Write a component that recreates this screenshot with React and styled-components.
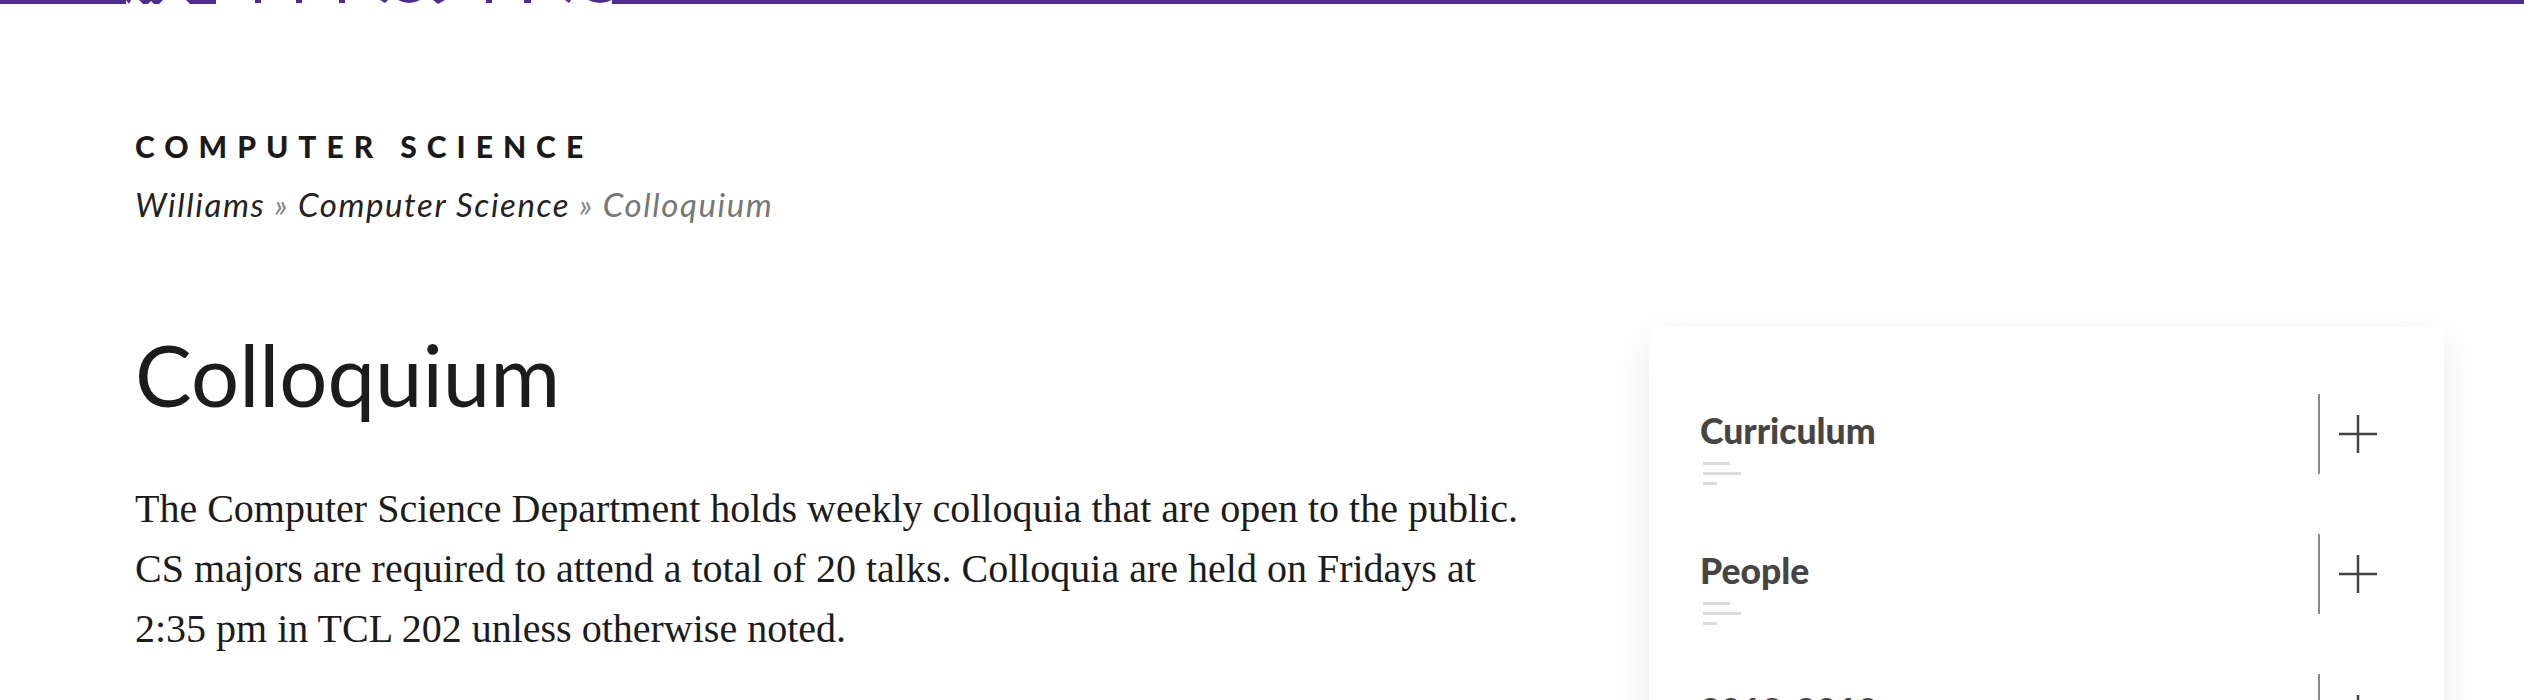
import styled, { createGlobalStyle } from "styled-components";

const GlobalStyle = createGlobalStyle`
    html, body {
        margin: 0;
        padding: 0;
        background: #fff;
    }
    body {
        font-family: Lato, "Noto Sans", sans-serif;
        color: #1c1c1c;
        overflow: hidden;
    }
`;

const purple = "#4f2d8f";

const TopBar = styled.header`
    display: flex;
    align-items: flex-start;
    height: 8px;
`;

const BarPiece = styled.div`
    height: 4px;
    background: ${purple};
    width: ${(p) => (p.$grow ? "auto" : `${p.$w}px`)};
    flex: ${(p) => (p.$grow ? 1 : "none")};
`;

const Page = styled.main`
    padding: 0 80px 0 135px;
`;

const DeptTitle = styled.div`
    margin-top: 120px;
    font-size: 30px;
    line-height: 36px;
    font-weight: 900;
    letter-spacing: 10px;
    text-transform: uppercase;
    color: #1a1a1a;
`;

const Crumbs = styled.nav`
    margin-top: 21px;
    font-size: 33px;
    line-height: 38px;
    font-style: italic;
    letter-spacing: 1.6px;
    color: #777;
`;

const Crumb = styled.a`
    color: #222;
    text-decoration: none;
`;

const Sep = styled.span`
    color: #888;
    margin: 0 9px;
`;

const Row = styled.div`
    display: flex;
    align-items: flex-start;
    gap: 90px;
    margin-top: 92px;
`;

const Content = styled.div`
    flex: 1;
    padding-top: 11px;
`;

const Heading = styled.h1`
    margin: 0;
    font-size: 85px;
    line-height: 96px;
    font-weight: 400;
    color: #1c1c1c;
`;

const Lead = styled.p`
    margin: 57px 0 0;
    max-width: 1420px;
    font-family: "Liberation Serif", "Times New Roman", serif;
    font-size: 40px;
    line-height: 60px;
    color: #1c1c1c;
`;

const Card = styled.aside`
    width: 795px;
    margin-top: 12px;
    padding: 67px 67px 0 51px;
    box-sizing: border-box;
    background: #fff;
    box-shadow: 0 14px 40px rgba(0, 0, 0, 0.09);
    min-height: 500px;
`;

const Item = styled.div`
    display: flex;
    align-items: flex-start;
    height: 80px;
    margin-bottom: 60px;
`;

const ItemText = styled.div`
    flex: 1;
    padding-top: 16px;
`;

const ItemTitle = styled.div`
    font-size: 35.5px;
    line-height: 41px;
    font-weight: 900;
    color: #454545;
`;

const Divider = styled.div`
    width: 2px;
    height: 80px;
    background: #8a8a8a;
`;

const PlusButton = styled.button`
    width: 38px;
    height: 80px;
    margin-left: 19px;
    padding: 0;
    border: 0;
    background: none;
    display: flex;
    align-items: center;
    justify-content: center;
    cursor: pointer;
`;

const Logo = () => (
    <svg width="491" height="8" viewBox="0 0 491 8">
        <g fill={purple}>
            <polygon points="0,0 5,0 3,4" />
            <polygon points="13,0 37,0 33,4 28,4 25,1 22,4 17,4" />
            <polygon points="60,0 90,0 90,4 64,4" />
            <rect x="129" y="0" width="6" height="3" />
            <rect x="170" y="0" width="6" height="3" />
            <rect x="213" y="0" width="6" height="3" />
            <path d="M254 0 H262 L259 3 Z" />
            <path d="M272 0 Q283 6 294 0 Z" />
            <path d="M307 0 H319 L312 4 Z" />
            <rect x="360" y="0" width="6" height="3" />
            <rect x="398" y="0" width="7" height="3" />
            <path d="M439 0 H445 L443 3 Z" />
            <path d="M462 0 Q474 6 486 0 Z" />
            <rect x="486" y="0" width="5" height="4" />
        </g>
    </svg>
);

const LinesIcon = () => (
    <svg width="40" height="24" viewBox="0 0 40 24" style={{ display: "block", marginTop: 11, marginLeft: 3 }}>
        <g fill="#dcdcdc">
            <rect x="0" y="0" width="27" height="3" />
            <rect x="0" y="10" width="38" height="3" />
            <rect x="0" y="20" width="14" height="3" />
        </g>
    </svg>
);

const PlusIcon = () => (
    <svg width="38" height="40" viewBox="0 0 38 40">
        <g stroke="#444" strokeWidth="2.5">
            <line x1="0" y1="20" x2="38" y2="20" />
            <line x1="19" y1="1" x2="19" y2="39" />
        </g>
    </svg>
);

const sections = ["Curriculum", "People", "2018-2019"];

const App = () => {
    return (
        <>
            <GlobalStyle />
            <TopBar>
                <BarPiece $w={126} />
                <Logo />
                <BarPiece $grow />
            </TopBar>
            <Page>
                <DeptTitle>Computer Science</DeptTitle>
                <Crumbs>
                    <Crumb href="#">Williams</Crumb>
                    <Sep>»</Sep>
                    <Crumb href="#">Computer Science</Crumb>
                    <Sep>»</Sep>
                    Colloquium
                </Crumbs>
                <Row>
                    <Content>
                        <Heading>Colloquium</Heading>
                        <Lead>
                            The Computer Science Department holds weekly colloquia that are open to the public.
                            CS majors are required to attend a total of 20 talks. Colloquia are held on Fridays at
                            2:35 pm in TCL 202 unless otherwise noted.
                        </Lead>
                    </Content>
                    <Card>
                        {sections.map((title) => (
                            <Item key={title}>
                                <ItemText>
                                    <ItemTitle>{title}</ItemTitle>
                                    <LinesIcon />
                                </ItemText>
                                <Divider />
                                <PlusButton aria-label={`Expand ${title}`}>
                                    <PlusIcon />
                                </PlusButton>
                            </Item>
                        ))}
                    </Card>
                </Row>
            </Page>
        </>
    );
};

export default App;
